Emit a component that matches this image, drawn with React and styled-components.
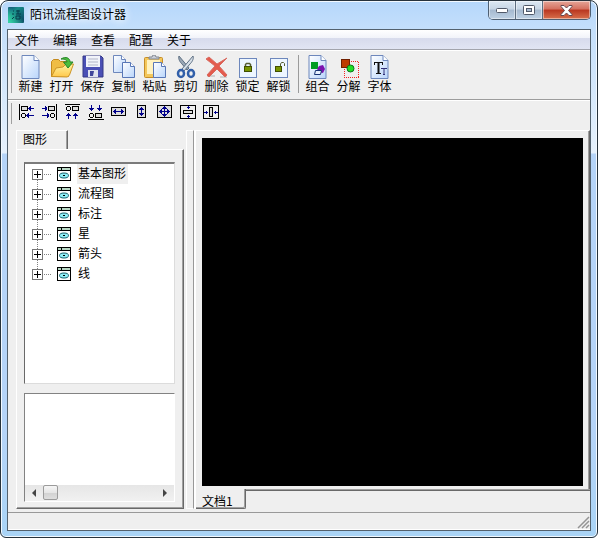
import React from "react";
import styled, { createGlobalStyle, css } from "styled-components";

const GlobalStyle = createGlobalStyle`
  * { box-sizing: border-box; }
  body {
    margin: 0;
    background: #fff;
    color: #000;
    font: 12px/16px "Noto Sans CJK SC", sans-serif;
  }
  button { font: inherit; color: inherit; padding: 0; border: 0; background: none; }
  svg { display: block; flex: none; }
`;

const Window = styled.div`
  display: flex;
  flex-direction: column;
  min-height: 100vh;
  padding: 0 6px 6px;
  border: 1px solid #26323c;
  border-radius: 8px 8px 6px 6px;
  box-shadow: inset 0 0 0 1px #f2f9ff;
  background: linear-gradient(to bottom, #b5d7fb 0, #c4dffb 28px, #e6f1fc 152px, #b5d4f8 153px, #b5d4f8 430px, #a9d4f6 100%);
`;

const TitleBar = styled.header`
  display: flex;
  align-items: flex-start;
  height: 28px;
  padding-left: 1px;
`;

const Title = styled.h1`
  flex: 1;
  margin: 5px 0 0 6px;
  font-size: 12px;
  line-height: 16px;
  font-weight: 400;
  text-shadow: 0 0 8px #fff, 0 0 8px #fff;
`;

const AppIcon = styled.svg`
  margin-top: 6px;
`;

const WindowControls = styled.div`
  display: flex;
  height: 19px;
  border: 1px solid #4e5f72;
  border-top: 0;
  border-radius: 0 0 5px 5px;
  overflow: hidden;
`;

const ControlButton = styled.button`
  display: grid;
  place-items: center;
  width: ${(p) => (p.$close ? 47 : 27)}px;
  border-right: ${(p) => (p.$close ? 0 : 1)}px solid #5d6e80;
  box-shadow: inset 0 0 0 1px rgba(255, 255, 255, 0.45);
  background: ${(p) =>
    p.$close
      ? "linear-gradient(#e5a598 0, #d4705f 45%, #b93620 50%, #d8704c 100%)"
      : "linear-gradient(#dce8f3 0, #c7d6e5 45%, #a5b9cf 50%, #bed1e4 100%)"};
`;

const Client = styled.div`
  flex: 1;
  display: flex;
  flex-direction: column;
  border: 1px solid #53616d;
  background: #efefef;
`;

const MenuBar = styled.nav`
  display: flex;
  gap: 14px;
  height: 20px;
  padding: 1px 7px;
  border-bottom: 1px solid #a2a4ac;
  background: linear-gradient(#fff 0, #f2f4fa 40%, #d7dbec 45%, #e1e5f3 100%);
`;

const MenuItem = styled.button`
  line-height: 16px;
`;

const ToolBar = styled.div`
  display: flex;
  align-items: flex-start;
  height: ${(p) => (p.$compact ? 28 : 50)}px;
  padding: ${(p) => (p.$compact ? "2px 3px" : "4px 3px")};
  border-top: 1px solid #fff;
  border-bottom: ${(p) => (p.$compact ? 0 : 1)}px solid #9c9c9c;
`;

const Grip = styled.span`
  align-self: stretch;
  width: 1px;
  margin: 0 3px 2px 0;
  background: #a0a0a0;
`;

const Separator = styled.span`
  align-self: stretch;
  width: 1px;
  margin: 0 3px 2px 4px;
  background: #9b9b9b;
`;

const ToolButton = styled.button`
  display: flex;
  flex-direction: column;
  align-items: center;
  width: 31px;
  line-height: 14px;
  white-space: nowrap;
`;

const AlignButton = styled.button`
  display: grid;
  place-items: center;
  width: 23px;
  height: 18px;
`;

const Workspace = styled.main`
  flex: 1;
  display: flex;
  padding: 2px 0 3px 8px;
`;

const Sidebar = styled.aside`
  display: flex;
  flex-direction: column;
  width: 168px;
`;

const raised = css`
  border: 1px solid #fff;
  border-right-color: #696969;
`;

const SideTab = styled.button`
  ${raised}
  align-self: flex-start;
  width: 52px;
  height: 19px;
  padding: 0 0 2px 6px;
  border-bottom: 0;
  box-shadow: inset -1px 0 #a0a0a0;
  line-height: 16px;
  text-align: left;
`;

const SidePage = styled.section`
  ${raised}
  flex: 1;
  display: flex;
  flex-direction: column;
  gap: 9px;
  padding: 12px 8px 6px 7px;
  border-bottom-color: #696969;
  box-shadow: inset -1px -1px #a0a0a0;
`;

const Tree = styled.ul`
  flex: 1;
  margin: 0;
  padding: 0 0 0 7px;
  list-style: none;
  border: 1px solid #dcdcdc;
  border-top: 2px solid #7b7b7b;
  border-left: 1px solid #696969;
  background: #fff;
`;

const TreeRow = styled.li`
  display: flex;
  align-items: center;
  height: 20px;
`;

const ExpandButton = styled.button`
  height: 20px;
`;

const NodeLabel = styled.span`
  height: 20px;
  margin-left: 5px;
  padding: 0 2px 0 1px;
  line-height: 18px;
  background: ${(p) => (p.$selected ? "#efefef" : "transparent")};
`;

const Preview = styled.div`
  display: flex;
  flex-direction: column;
  justify-content: flex-end;
  height: 109px;
  border: 1px solid #fff;
  border-top-color: #828282;
  border-left-color: #828282;
  background: #fff;
`;

const ScrollBar = styled.div`
  display: flex;
  height: 16px;
  background: linear-gradient(#e6e6e6, #f1f1f1);
`;

const ScrollArrow = styled.button`
  display: grid;
  place-items: center;
  width: 18px;
`;

const ScrollTrack = styled.div`
  flex: 1;
`;

const ScrollThumb = styled.div`
  width: 15px;
  height: 15px;
  border: 1px solid #9b9b9b;
  border-radius: 2px;
  background: linear-gradient(#f6f6f6 0, #e6e6e6 50%, #d2d2d2 55%, #dedede 100%);
`;

const Splitter = styled.div`
  width: 8px;
  margin-left: 2px;
  border: 1px solid #fff;
  border-right-color: #999;
`;

const Editor = styled.section`
  flex: 1;
  display: flex;
  flex-direction: column;
  min-width: 0;
  border-left: 2px solid #fff;
`;

const DocumentPage = styled.div`
  flex: 1;
  display: flex;
  padding: 7px 6px 3px 6px;
  border-top: 1px solid #fff;
  border-right: 1px solid #696969;
  box-shadow: inset -1px 0 #a0a0a0;
`;

const Canvas = styled.canvas`
  flex: 1;
  width: 100%;
  min-width: 0;
  min-height: 0;
  height: auto;
  background: #000;
`;

const DocumentTabs = styled.div`
  display: flex;
  height: 20px;
`;

const DocumentTab = styled.button`
  width: 50px;
  padding: 4px 0 0 6px;
  text-align: left;
  border-right: 1px solid #696969;
  border-bottom: 1px solid #696969;
  border-radius: 0 0 2px 0;
  box-shadow: inset -1px -1px #a0a0a0;
`;

const TabRail = styled.div`
  flex: 1;
  border-top: 1px solid #a0a0a0;
  box-shadow: inset 0 1px #696969;
`;

const StatusBar = styled.footer`
  display: flex;
  justify-content: flex-end;
  align-items: flex-end;
  height: 18px;
  border-top: 1px solid #999;
  border-bottom: 1px solid #fff;
`;

const Page = ({ children, x = 3 }) => (
  <g>
    <path d={`M${x} .5h12l5 5v18h-17z`} fill="url(#paper)" stroke="#6d87bc" />
    <path d={`M${x + 12} .5v5h5`} fill="#fff" stroke="#6d87bc" />
    {children}
  </g>
);

const art = {
  new: <Page />,
  open: (
    <>
      <path d="M1.5 21.5v-15l2-2h5l2 2h8v15z" fill="#efbd45" stroke="#c48a1e" />
      <path d="M1.5 21.5 6 13l7-1 3-3h7.500l-4 11-2 2z" fill="url(#folder)" stroke="#cc9527" />
      <path d="M11 4c5-3 9-1 9 3h3l-5 6-4.500-6H17c0-2-2-3-6-3z" fill="#4cbd3c" stroke="#27852a" />
    </>
  ),
  save: (
    <>
      <path d="M2 1h18l2 2v19H2z" fill="#4a4fb5" stroke="#353985" />
      <path d="M5 1h14v11H5z" fill="#f1f3fa" />
      <path d="M7 4h10M7 7h10M7 10h10" stroke="#b1b5c8" />
      <path d="M7 15h10v7H7z" fill="#dfe3ef" />
      <path d="M9 16h4l-1 5H9z" fill="#3f459a" />
    </>
  ),
  copy: (
    <>
      <path d="M1.500 .5h8l4 4v13h-12z" fill="url(#paper)" stroke="#6d87bc" />
      <path d="M9.500 .5v4h4" fill="#fff" stroke="#6d87bc" />
      <path d="M10.500 7.500h8l4 4v11h-12z" fill="url(#paper)" stroke="#5877b7" />
      <path d="M18.500 7.500v4h4" fill="#fff" stroke="#5877b7" />
    </>
  ),
  paste: (
    <>
      <rect x="1.500" y="2.500" width="18" height="20" rx="1" fill="#f4c75a" stroke="#c58d28" />
      <path d="M4 5h13v14H4z" fill="#fff2c0" />
      <path d="M6 4V2h3l1-2h2l1 2h3v2z" fill="#c9ced8" stroke="#81868e" />
      <path d="M10.500 7.500h8l4 4v11h-12z" fill="url(#paper)" stroke="#5877b7" />
      <path d="M18.500 7.500v4h4" fill="#fff" stroke="#5877b7" />
    </>
  ),
  cut: (
    <>
      <path d="M5 1c-1 3 1 6 3 8l5 6 2-2z" fill="#9aa7b5" stroke="#5e7084" />
      <path d="M19 1c1 3-1 6-3 8l-6 7-2-2z" fill="#d7dfe7" stroke="#5e7084" />
      <ellipse cx="7" cy="18.500" rx="3" ry="3.500" fill="none" stroke="#315fa9" strokeWidth="2.500" />
      <ellipse cx="17" cy="18.500" rx="3" ry="3.500" fill="none" stroke="#315fa9" strokeWidth="2.500" />
    </>
  ),
  remove: (
    <>
      <path d="M2 21h8M15 22h7" stroke="#d0d0d0" strokeWidth="2" />
      <path d="M1 4l3-2 8 7 10-6-8 8 8 9-2 2-8-8-8 8-2-2 8-9z" fill="#e45b4d" stroke="#d86a60" />
    </>
  ),
  lock: (
    <>
      <rect x="3.500" y="3.500" width="17" height="19" fill="#edf6ff" stroke="#6d87bc" />
      <path d="M9.500 12V9.500l1-1h3l1 1V12" fill="none" stroke="#555d32" strokeWidth="1.500" />
      <rect x="8.500" y="11.500" width="7" height="5" fill="#789500" stroke="#415000" />
    </>
  ),
  unlock: (
    <>
      <rect x="3.500" y="3.500" width="17" height="19" fill="#edf6ff" stroke="#6d87bc" />
      <path d="M13.500 12V9l1-1.500h2l1 1V11" fill="none" stroke="#555d32" />
      <rect x="8.500" y="11.500" width="6" height="5" fill="#789500" stroke="#415000" />
    </>
  ),
  group: (
    <Page>
      <path d="M5 7h7v7H5z" fill="#009b22" />
      <path d="M13 11l4-1 2 4-2 4-4-1-2-3z" fill="#7c13ae" />
      <path d="M9.500 15.500h6l-1 4h-6z" fill="#e7f1ff" stroke="#163273" />
    </Page>
  ),
  ungroup: (
    <>
      <g shapeRendering="crispEdges">
        <path d="M7.500 6.500h14v16h-14z" fill="none" stroke="#f12222" strokeDasharray="1 1" />
        <path d="M4.500 4.500h8v8h-8z" fill="#bd3b00" stroke="#702000" />
      </g>
      <circle cx="13.500" cy="13.500" r="3.500" fill="#20de25" stroke="#08751c" />
    </>
  ),
  font: (
    <Page>
      <path d="M6 7.500h9M6.500 7v3M14.500 7v3M8 18.500h5" fill="none" stroke="#111" />
      <path d="M10.500 7v12" stroke="#111" strokeWidth="2" />
      <path d="M13 13.500h6M16 14v5M15 19.500h2" fill="none" stroke="#303078" />
    </Page>
  ),
};

function ToolIcon({ name }) {
  return (
    <svg width="24" height="24" viewBox="0 0 24 24" aria-hidden="true">
      <defs>
        <linearGradient id="paper" x2="1" y2="1">
          <stop stopColor="#fff" />
          <stop offset="1" stopColor="#b9d5fb" />
        </linearGradient>
        <linearGradient id="folder" x2="0" y2="1">
          <stop stopColor="#fff4a2" />
          <stop offset="1" stopColor="#ffc84b" />
        </linearGradient>
      </defs>
      {art[name]}
    </svg>
  );
}

const LeftAlignArt = () => (
  <>
    <path d="M.5 0v16" />
    <path d="M2.500 2.500h6v4h-6z" fill="#ddd" />
    <circle cx="4.500" cy="11.500" r="2" fill="none" />
    <path d="M9 4.500h6M10.500 3v3M11.500 2v5M7 11.500h8M8.500 10v3M9.500 9v5" stroke="#00008b" />
  </>
);

const TopAlignArt = () => (
  <>
    <path d="M0 .5h15" />
    <circle cx="3.500" cy="4.500" r="2" fill="none" />
    <path d="M7.500 2.500h6v4h-6z" fill="#ddd" />
    <path d="M3.500 9v6M2 10.500h3M1 11.500h5M10.500 9v6M9 10.500h3M8 11.500h5" stroke="#00008b" />
  </>
);

const alignArt = {
  左对齐: <LeftAlignArt />,
  右对齐: (
    <>
      <path d="M14.500 0v16M6.500 2.500h6v4h-6z" fill="#ddd" />
      <circle cx="10.500" cy="11.500" r="2" fill="none" />
      <path d="M0 4.500h5M3.500 2v5M4.500 3v3M0 11.500h7M5.500 9v5M6.500 10v3" stroke="#00008b" />
    </>
  ),
  顶端对齐: <TopAlignArt />,
  底端对齐: (
    <>
      <path d="M0 15.500h16" />
      <circle cx="3.500" cy="11.500" r="2" fill="none" />
      <path d="M7.500 9.500h6v4h-6z" fill="#ddd" />
      <path d="M3.500 1v6M1 4.500h5M2 5.500h3M11.500 1v6M9 4.500h5M10 5.500h3" stroke="#00008b" />
    </>
  ),
  等宽: (
    <>
      <path d="M.5 3.500h14v8H.5z" fill="#ddd" />
      <path d="M2 7.500h11M3.500 6v3M4.500 5v5M11.500 6v3M10.500 5v5" stroke="#00008b" />
    </>
  ),
  等高: (
    <>
      <path d="M3.500 1.500h8v12h-8z" fill="#ddd" />
      <path d="M7.500 3v9M6 4.500h3M5 5.500h5M6 10.500h3M5 9.500h5" stroke="#00008b" />
    </>
  ),
  等大小: (
    <>
      <path d="M.5 1.500h14v12H.5z" fill="#ddd" />
      <path d="M2 7.500h11M7.500 2v11M3.500 6v3M11.500 6v3M6 3.500h3M6 11.500h3M4.500 5v5M10.500 5v5M5 4.500h5M5 10.500h5" stroke="#00008b" />
    </>
  ),
  垂直居中: (
    <>
      <path d="M.5 1.500h15v13H.5z" fill="none" />
      <path d="M3.500 6.500h9v3h-9z" fill="#ddd" />
      <path d="M8.500 2v3M7 3.500h3M8.500 11v3M7 12.500h3" stroke="#00008b" />
    </>
  ),
  水平居中: (
    <>
      <path d="M.5 1.500h15v13H.5z" fill="none" />
      <path d="M6.500 3.500h3v9h-3z" fill="#ddd" />
      <path d="M1 8.500h4M3.500 7v3M11 8.500h4M12.500 7v3" stroke="#00008b" />
    </>
  ),
};

const tools = [
  ["new", "新建"],
  ["open", "打开"],
  ["save", "保存"],
  ["copy", "复制"],
  ["paste", "粘贴"],
  ["cut", "剪切"],
  ["remove", "删除"],
  ["lock", "锁定"],
  ["unlock", "解锁"],
  null,
  ["group", "组合"],
  ["ungroup", "分解"],
  ["font", "字体"],
];
const shapes = ["基本图形", "流程图", "标注", "星", "箭头", "线"];

function ExpandGlyph({ first, last }) {
  return (
    <svg width="20" height="20" shapeRendering="crispEdges" aria-hidden="true">
      <path
        d={`M5.500 ${first ? 10 : 0}V${last ? 10 : 20}M12 10.500h8`}
        stroke="#808080"
        strokeDasharray="1 1"
      />
      <rect x=".5" y="5.500" width="10" height="10" fill="#fff" stroke="#777" />
      <path d="M2 10.500h7M5.500 7v7" stroke="#000" />
    </svg>
  );
}

function NodeIcon() {
  return (
    <svg width="20" height="14" aria-hidden="true">
      <g shapeRendering="crispEdges">
        <rect x="5.500" y=".5" width="13" height="13" fill="#fff" stroke="#000" />
        <path d="M6 1h12v2H6z" fill="#b8d8c5" />
        <path d="M6 3.500h12M9.500 1v2" stroke="#000" />
      </g>
      <ellipse cx="12" cy="8.500" rx="4.500" ry="2.500" fill="#90eff7" stroke="#12616c" />
      <path d="M11 8.500h2" stroke="#000" />
    </svg>
  );
}

export default function App() {
  return (
    <>
      <GlobalStyle />
      <Window>
        <TitleBar>
          <AppIcon width="16" height="16" aria-hidden="true">
            <defs>
              <linearGradient id="logo" x2="1" y2="1">
                <stop stopColor="#124d78" />
                <stop offset=".35" stopColor="#178c88" />
                <stop offset="1" stopColor="#073b5d" />
              </linearGradient>
              <linearGradient id="glow" x1="0" x2="1" y1="1" y2="0">
                <stop stopColor="#39e0aa" />
                <stop offset=".6" stopColor="#39e0aa" stopOpacity="0" />
              </linearGradient>
            </defs>
            <rect width="16" height="16" rx="1" fill="url(#logo)" />
            <rect width="16" height="16" rx="1" fill="url(#glow)" />
            <path d="M5 4h1M4 7h2M4 12l2-2M8 4h4M10 3v4M8 7h5M8 9h4v3H8z" fill="none" stroke="#073d4b" />
          </AppIcon>
          <Title>陌讯流程图设计器</Title>
          <WindowControls>
            <ControlButton aria-label="最小化">
              <svg width="13" height="7"><rect x=".5" y="1.500" width="11" height="4" rx="1" fill="#fff" stroke="#505969" /></svg>
            </ControlButton>
            <ControlButton aria-label="最大化">
              <svg width="12" height="10">
                <rect x=".5" y=".5" width="11" height="9" rx="1" fill="#fff" stroke="#505969" />
                <rect x="3.500" y="3.500" width="5" height="3" fill="#a9bbd0" stroke="#505969" />
              </svg>
            </ControlButton>
            <ControlButton $close aria-label="关闭">
              <svg width="13" height="11"><path d="M1 .5h3l2.500 2.500L9 .5h3v1L8.500 5.500l3.500 4v1H9L6.500 8 4 10.500H1v-1l3.500-4L1 1.500z" fill="#fff" stroke="#654850" /></svg>
            </ControlButton>
          </WindowControls>
        </TitleBar>
        <Client>
          <MenuBar>
            {["文件", "编辑", "查看", "配置", "关于"].map((name) => (
              <MenuItem key={name}>{name}</MenuItem>
            ))}
          </MenuBar>
          <ToolBar>
            <Grip />
            {tools.map((tool, i) =>
              tool ? (
                <ToolButton key={tool[0]}>
                  <ToolIcon name={tool[0]} />
                  {tool[1]}
                </ToolButton>
              ) : (
                <Separator key={i} />
              )
            )}
          </ToolBar>
          <ToolBar $compact>
            <Grip />
            {Object.entries(alignArt).map(([name, drawing]) => (
              <AlignButton key={name} aria-label={name}>
                <svg width="16" height="16" fill="none" stroke="#000" shapeRendering="crispEdges">
                  {drawing}
                </svg>
              </AlignButton>
            ))}
          </ToolBar>
          <Workspace>
            <Sidebar>
              <SideTab role="tab" aria-selected="true">图形</SideTab>
              <SidePage>
                <Tree>
                  {shapes.map((name, i) => (
                    <TreeRow key={name}>
                      <ExpandButton aria-label={`展开${name}`}>
                        <ExpandGlyph first={i === 0} last={i === shapes.length - 1} />
                      </ExpandButton>
                      <NodeIcon />
                      <NodeLabel $selected={i === 0}>{name}</NodeLabel>
                    </TreeRow>
                  ))}
                </Tree>
                <Preview>
                  <ScrollBar>
                    <ScrollArrow aria-label="向左滚动">
                      <svg width="4" height="8"><path d="M4 0v8L0 4z" fill="#444" /></svg>
                    </ScrollArrow>
                    <ScrollTrack><ScrollThumb /></ScrollTrack>
                    <ScrollArrow aria-label="向右滚动">
                      <svg width="4" height="8"><path d="M0 0v8l4-4z" fill="#444" /></svg>
                    </ScrollArrow>
                  </ScrollBar>
                </Preview>
              </SidePage>
            </Sidebar>
            <Splitter />
            <Editor>
              <DocumentPage>
                <Canvas aria-label="绘图区" />
              </DocumentPage>
              <DocumentTabs>
                <DocumentTab role="tab" aria-selected="true">文档1</DocumentTab>
                <TabRail />
              </DocumentTabs>
            </Editor>
          </Workspace>
          <StatusBar>
            <svg width="13" height="13" aria-hidden="true">
              <path d="M1 12 12 1M5 12l7-7M9 12l3-3" stroke="#949494" strokeWidth="1.500" />
            </svg>
          </StatusBar>
        </Client>
      </Window>
    </>
  );
}
